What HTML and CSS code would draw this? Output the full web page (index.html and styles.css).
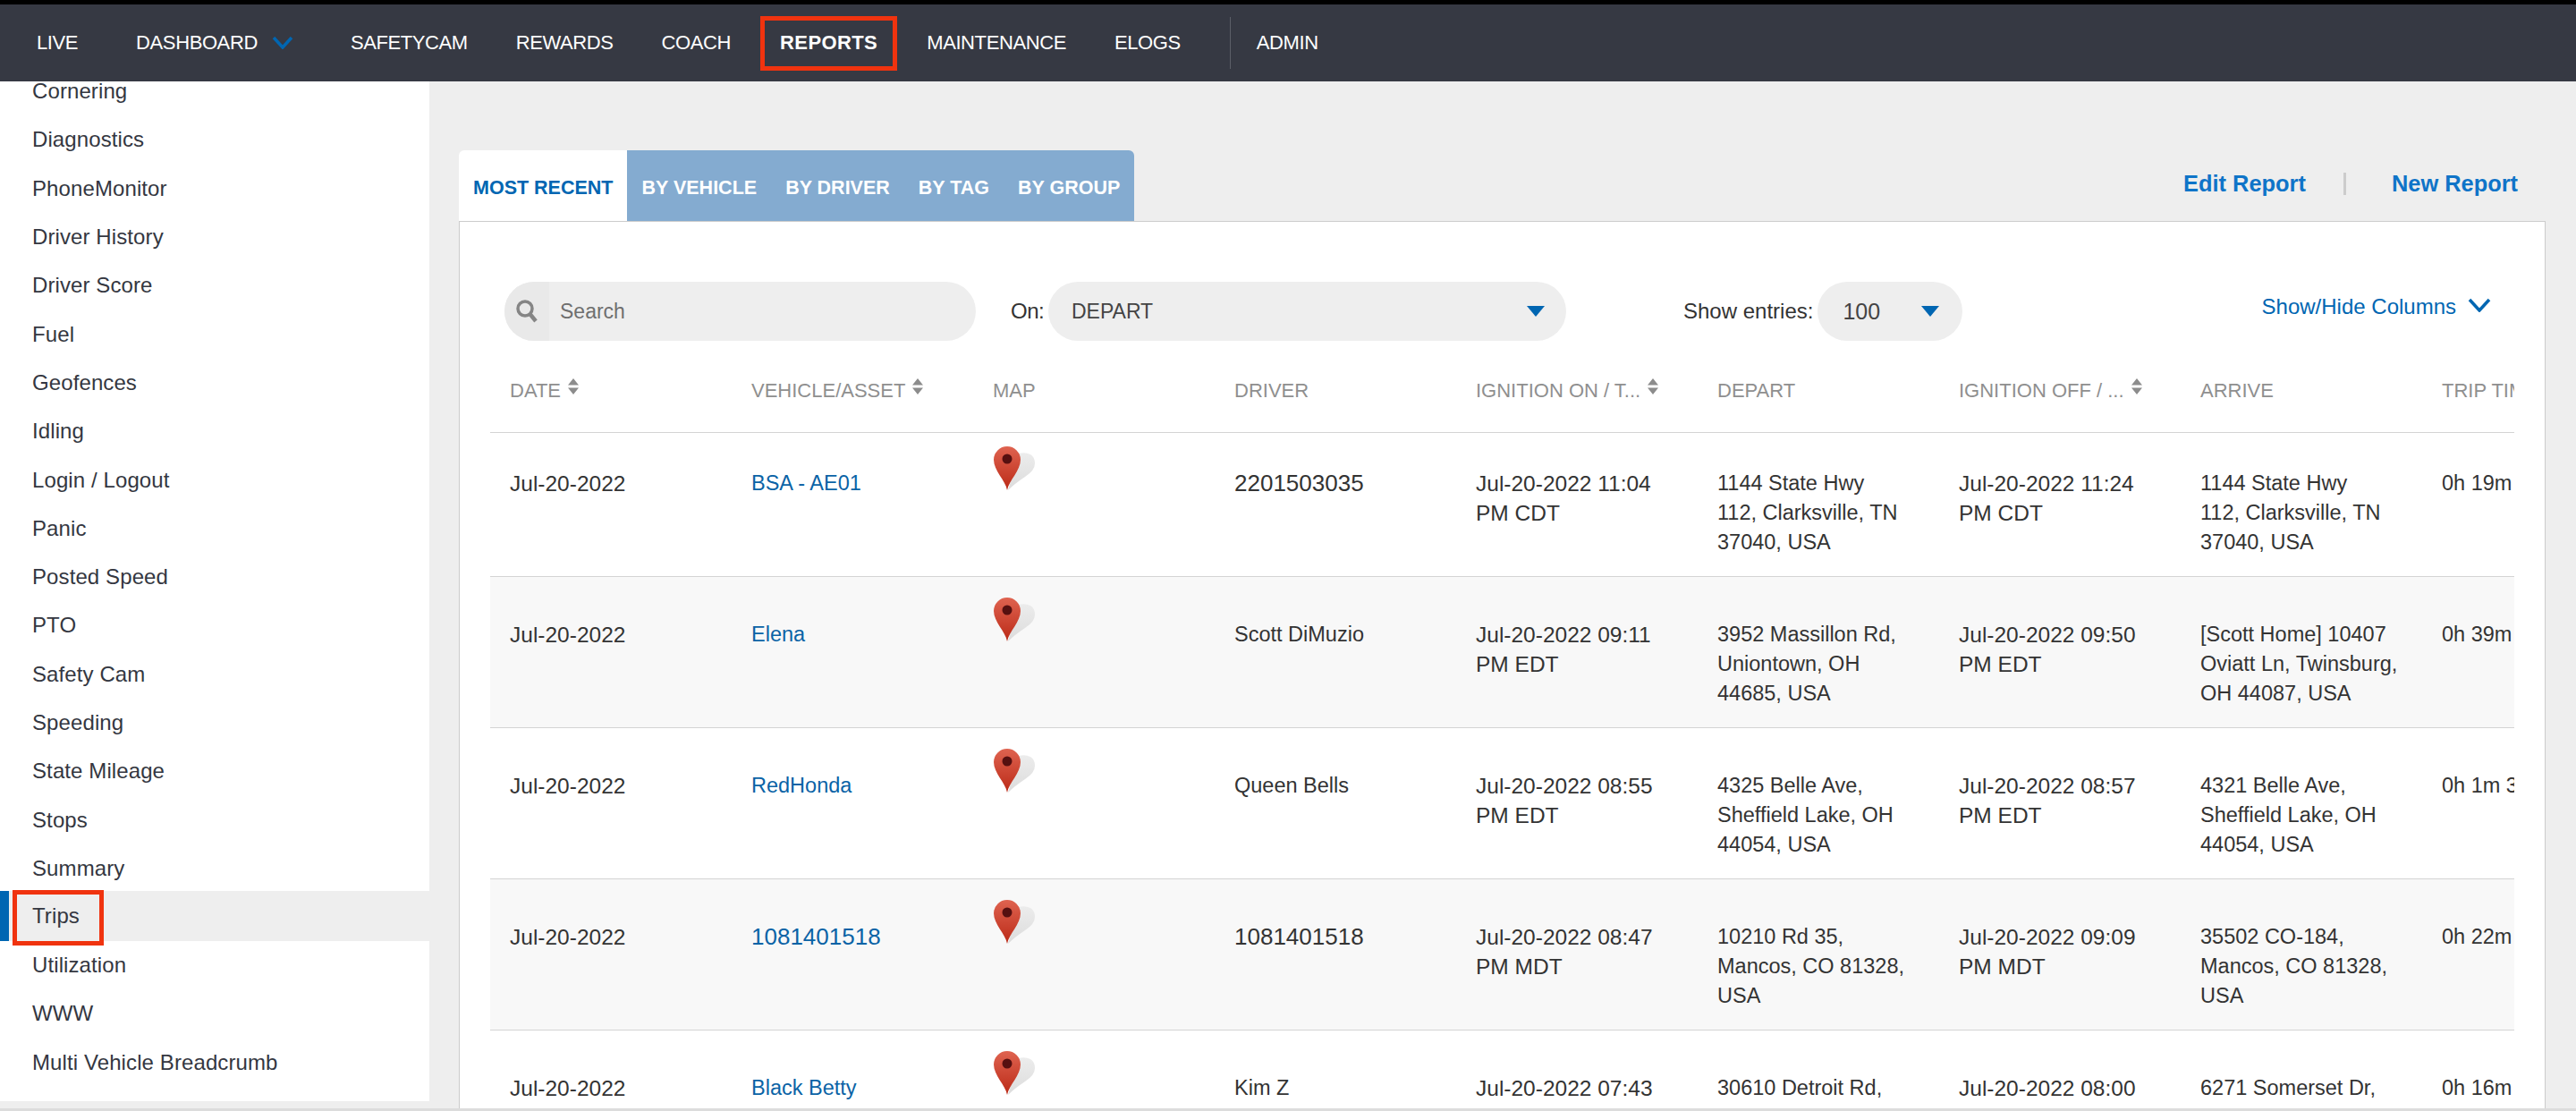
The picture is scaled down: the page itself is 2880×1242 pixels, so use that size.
FILE: index.html
```html
<!DOCTYPE html>
<html lang="en">
<head>
    <meta charset="UTF-8">
    <title>Trips Report</title>
    <link rel="stylesheet" href="styles.css">
</head>
<body>
    <svg class="icon-defs" aria-hidden="true">
        <defs>
            <linearGradient id="pin-fill" x1="0" y1="0" x2="0" y2="1">
                <stop offset="0" stop-color="#df6350"/>
                <stop offset="1" stop-color="#bb2a17"/>
            </linearGradient>
            <linearGradient id="pin-shade" x1="0" y1="0" x2="0" y2="1">
                <stop offset="0" stop-color="#ececec"/>
                <stop offset="1" stop-color="#dcdcdc"/>
            </linearGradient>
        </defs>
        <symbol id="pin" viewBox="0 0 48 50">
            <path d="M17 49L29 8Q36 6 42 9Q47 12 47 19Q47 27 36 34Q24 42 17 49Z" fill="url(#pin-shade)"/>
            <path d="M16 49C14 38 1 27 1 15A15 15 0 0 1 31 15C31 27 18 38 16 49Z" fill="url(#pin-fill)"/>
            <circle cx="16" cy="14" r="5.5" fill="#561010"/>
        </symbol>
        <symbol id="sort" viewBox="0 0 12 18">
            <path d="M6 0L12 7.5H0Z M0 10.5H12L6 18Z" fill="#8c8c8c"/>
        </symbol>
    </svg>

    <nav class="topnav">
        <a href="#" class="nav-live">LIVE</a>
        <a href="#" class="nav-dash">DASHBOARD
            <svg class="nav-chevron" viewBox="0 0 24 14"><path d="M2 1L12 12L22 1" fill="none" stroke="#0066b2" stroke-width="3.5"/></svg>
        </a>
        <a href="#">SAFETYCAM</a>
        <a href="#">REWARDS</a>
        <a href="#">COACH</a>
        <a href="#" class="nav-marked">REPORTS</a>
        <a href="#">MAINTENANCE</a>
        <a href="#">ELOGS</a>
        <span class="nav-divider"></span>
        <a href="#" class="nav-admin">ADMIN</a>
    </nav>

    <div class="page">
        <aside class="sidebar">
            <ul class="report-list">
                <li>Cornering</li>
                <li>Diagnostics</li>
                <li>PhoneMonitor</li>
                <li>Driver History</li>
                <li>Driver Score</li>
                <li>Fuel</li>
                <li>Geofences</li>
                <li>Idling</li>
                <li>Login / Logout</li>
                <li>Panic</li>
                <li>Posted Speed</li>
                <li>PTO</li>
                <li>Safety Cam</li>
                <li>Speeding</li>
                <li>State Mileage</li>
                <li>Stops</li>
                <li>Summary</li>
                <li class="active">Trips<span class="mark-box"></span></li>
                <li>Utilization</li>
                <li>WWW</li>
                <li>Multi Vehicle Breadcrumb</li>
            </ul>
        </aside>

        <main class="content">
            <div class="tab-row">
                <div class="tabs">
                    <a href="#" class="tab current">MOST RECENT</a>
                    <div class="tab-group">
                        <a href="#" class="tab">BY VEHICLE</a>
                        <a href="#" class="tab">BY DRIVER</a>
                        <a href="#" class="tab">BY TAG</a>
                        <a href="#" class="tab">BY GROUP</a>
                    </div>
                </div>
                <div class="report-links">
                    <a href="#">Edit Report</a>
                    <span class="link-sep"></span>
                    <a href="#">New Report</a>
                </div>
            </div>

            <section class="card">
                <div class="filters">
                    <div class="search">
                        <span class="search-icon">
                            <svg viewBox="0 0 24 26" width="24" height="26"><circle cx="10" cy="10" r="8" fill="none" stroke="#858585" stroke-width="3.5"/><path d="M15.5 16L22 24" stroke="#858585" stroke-width="4.5"/></svg>
                        </span>
                        <span class="search-text">Search</span>
                    </div>
                    <label class="filter-label on-label">On:</label>
                    <div class="pill on-select">
                        <span>DEPART</span>
                        <span class="caret"></span>
                    </div>
                    <label class="filter-label entries-label">Show entries:</label>
                    <div class="pill entries-select">
                        <span>100</span>
                        <span class="caret"></span>
                    </div>
                    <a href="#" class="columns-toggle">Show/Hide Columns
                        <svg viewBox="0 0 26 16" width="26" height="16"><path d="M2 2L13 14L24 2" fill="none" stroke="#0066b2" stroke-width="3.5"/></svg>
                    </a>
                </div>

                <div class="table-wrap">
                    <table class="trips">
                        <thead>
                            <tr>
                                <th>DATE <svg class="sort"><use href="#sort"/></svg></th>
                                <th>VEHICLE/ASSET <svg class="sort"><use href="#sort"/></svg></th>
                                <th>MAP</th>
                                <th>DRIVER</th>
                                <th>IGNITION ON / T... <svg class="sort"><use href="#sort"/></svg></th>
                                <th>DEPART</th>
                                <th>IGNITION OFF / ... <svg class="sort"><use href="#sort"/></svg></th>
                                <th>ARRIVE</th>
                                <th>TRIP TIME</th>
                            </tr>
                        </thead>
                        <tbody>
                            <tr>
                                <td class="date">Jul-20-2022</td>
                                <td><a href="#">BSA - AE01</a></td>
                                <td><svg class="pin"><use href="#pin"/></svg></td>
                                <td class="num">2201503035</td>
                                <td class="date">Jul-20-2022 11:04<br>PM CDT</td>
                                <td>1144 State Hwy<br>112, Clarksville, TN<br>37040, USA</td>
                                <td class="date">Jul-20-2022 11:24<br>PM CDT</td>
                                <td>1144 State Hwy<br>112, Clarksville, TN<br>37040, USA</td>
                                <td class="time">0h 19m 12s</td>
                            </tr>
                            <tr>
                                <td class="date">Jul-20-2022</td>
                                <td><a href="#">Elena</a></td>
                                <td><svg class="pin"><use href="#pin"/></svg></td>
                                <td>Scott DiMuzio</td>
                                <td class="date">Jul-20-2022 09:11<br>PM EDT</td>
                                <td>3952 Massillon Rd,<br>Uniontown, OH<br>44685, USA</td>
                                <td class="date">Jul-20-2022 09:50<br>PM EDT</td>
                                <td>[Scott Home] 10407<br>Oviatt Ln, Twinsburg,<br>OH 44087, USA</td>
                                <td class="time">0h 39m 40s</td>
                            </tr>
                            <tr>
                                <td class="date">Jul-20-2022</td>
                                <td><a href="#">RedHonda</a></td>
                                <td><svg class="pin"><use href="#pin"/></svg></td>
                                <td>Queen Bells</td>
                                <td class="date">Jul-20-2022 08:55<br>PM EDT</td>
                                <td>4325 Belle Ave,<br>Sheffield Lake, OH<br>44054, USA</td>
                                <td class="date">Jul-20-2022 08:57<br>PM EDT</td>
                                <td>4321 Belle Ave,<br>Sheffield Lake, OH<br>44054, USA</td>
                                <td class="time">0h 1m 35s</td>
                            </tr>
                            <tr>
                                <td class="date">Jul-20-2022</td>
                                <td><a href="#" class="num">1081401518</a></td>
                                <td><svg class="pin"><use href="#pin"/></svg></td>
                                <td class="num">1081401518</td>
                                <td class="date">Jul-20-2022 08:47<br>PM MDT</td>
                                <td>10210 Rd 35,<br>Mancos, CO 81328,<br>USA</td>
                                <td class="date">Jul-20-2022 09:09<br>PM MDT</td>
                                <td>35502 CO-184,<br>Mancos, CO 81328,<br>USA</td>
                                <td class="time">0h 22m 8s</td>
                            </tr>
                            <tr>
                                <td class="date">Jul-20-2022</td>
                                <td><a href="#">Black Betty</a></td>
                                <td><svg class="pin"><use href="#pin"/></svg></td>
                                <td>Kim Z</td>
                                <td class="date">Jul-20-2022 07:43<br>PM EDT</td>
                                <td>30610 Detroit Rd,<br>Westlake, OH<br>44145, USA</td>
                                <td class="date">Jul-20-2022 08:00<br>PM EDT</td>
                                <td>6271 Somerset Dr,<br>Westlake, OH<br>44145, USA</td>
                                <td class="time">0h 16m 30s</td>
                            </tr>
                        </tbody>
                    </table>
                </div>
            </section>
        </main>
    </div>
    <div class="bottom-strip"></div>
</body>
</html>
```

FILE: styles.css
```css
* {
    box-sizing: border-box;
}
html, body {
    height: 1242px;
    overflow: hidden;
}
body {
    margin: 0;
    display: flex;
    flex-direction: column;
    font-family: "Liberation Sans", Arial, sans-serif;
    font-size: 24px;
    color: #333;
    background-color: #eee;
}
a {
    text-decoration: none;
}
.icon-defs {
    position: absolute;
    width: 0;
    height: 0;
}

/* top nav */
.topnav {
    flex: none;
    height: 91px;
    border-top: 5px solid #000;
    background-color: #363943;
    display: flex;
    align-items: center;
    font-size: 22px;
    letter-spacing: -0.4px;
    position: relative;
    z-index: 2;
}
.topnav a {
    color: #fff;
    margin: 0 27px;
    white-space: nowrap;
}
.topnav .nav-live {
    margin: 0 37px 0 41px;
}
.topnav .nav-dash {
    margin: 0 37px 0 28px;
    display: flex;
    align-items: center;
    gap: 16px;
}
.nav-chevron {
    width: 24px;
    height: 14px;
}
.topnav .nav-marked {
    margin: 0 6px;
    height: 61px;
    padding: 0 17px;
    border: 5px solid #f0330f;
    display: flex;
    align-items: center;
    font-weight: bold;
    letter-spacing: 0.4px;
}
.nav-divider {
    width: 1px;
    height: 58px;
    margin-left: 28px;
    background-color: #5c5f68;
}
.topnav .nav-admin {
    margin-left: 29px;
}

/* layout */
.page {
    flex: 1;
    min-height: 0;
    display: flex;
}
.sidebar {
    flex: none;
    width: 480px;
    height: 1140px;
    background-color: #fff;
    overflow: hidden;
}
.report-list {
    list-style: none;
    margin: -16px 0 0;
    padding: 0;
}
.report-list li {
    height: 54.3px;
    padding-left: 36px;
    display: flex;
    align-items: center;
    color: #343741;
    letter-spacing: 0.1px;
    position: relative;
}
.report-list li.active {
    background-color: #eee;
    border-left: 10px solid #0066b2;
    padding-left: 26px;
    margin-top: -2px;
    height: 56px;
}
.mark-box {
    position: absolute;
    left: 4px;
    top: -1px;
    width: 102px;
    height: 62px;
    border: 5px solid #f0330f;
}

/* main */
.content {
    flex: 1;
    min-width: 0;
    padding: 77px 34px 0 33px;
    display: flex;
    flex-direction: column;
}
.tab-row {
    flex: none;
    height: 79px;
    display: flex;
    justify-content: space-between;
}
.tabs {
    display: flex;
    font-size: 21.5px;
    font-weight: bold;
}
.tab-group {
    display: flex;
    background-color: #84abd0;
    border-radius: 0 6px 0 0;
}
.tab {
    padding: 5px 16px 0;
    display: flex;
    align-items: center;
    color: #fff;
    white-space: nowrap;
}
.tab.current {
    background-color: #fff;
    color: #0066b2;
    border-radius: 6px 0 0 0;
}
.report-links {
    display: flex;
    align-items: center;
    height: 74px;
    margin-right: 31px;
    font-size: 25.4px;
    font-weight: bold;
}
.report-links a {
    color: #0f74c8;
}
.link-sep {
    width: 3px;
    height: 25px;
    margin: 0 51px 0 42px;
    background-color: #ccc;
}

/* card */
.card {
    flex: 1;
    min-height: 0;
    background-color: #fff;
    border: 1px solid #ccc;
    border-width: 1px 1px 0 1px;
    overflow: hidden;
}
.filters {
    height: 132px;
    padding: 67px 60px 0 50px;
    display: flex;
    align-items: flex-start;
}
.search, .pill {
    height: 66px;
    background-color: #eee;
    border-radius: 33px;
    display: flex;
    align-items: center;
    font-size: 23px;
}
.search {
    width: 527px;
    overflow: hidden;
    color: #6f6f6f;
}
.search-icon {
    width: 50px;
    height: 66px;
    padding-left: 13px;
    display: flex;
    align-items: center;
    background-color: #e9e9e9;
}
.search-text {
    margin-left: 12px;
}
.filter-label {
    height: 66px;
    display: flex;
    align-items: center;
    color: #333;
}
.on-label {
    width: 32px;
    margin-left: 39px;
    letter-spacing: -0.5px;
}
.pill {
    color: #444;
    justify-content: space-between;
}
.on-select {
    width: 579px;
    margin-left: 10px;
    padding: 0 24px 0 26px;
}
.entries-label {
    margin-left: 131px;
}
.entries-select {
    width: 162px;
    margin-left: 5px;
    padding: 0 26px 0 28px;
    font-size: 25px;
}
.caret {
    width: 0;
    height: 0;
    border-left: 10px solid transparent;
    border-right: 10px solid transparent;
    border-top: 12px solid #0066b2;
}
.columns-toggle {
    margin-left: auto;
    height: 56px;
    display: flex;
    align-items: center;
    gap: 13px;
    color: #0066b2;
}
.columns-toggle svg {
    margin-top: -4px;
}

/* table */
.table-wrap {
    margin: 0 34px;
    overflow: hidden;
}
.trips {
    width: 2430px;
    table-layout: fixed;
    border-collapse: collapse;
}
.trips th {
    height: 103px;
    padding: 42px 10px 31px 22px;
    border-bottom: 1px solid #d4d4d4;
    font-size: 22px;
    line-height: 30px;
    font-weight: normal;
    text-align: left;
    color: #8f8f8f;
    white-space: nowrap;
    vertical-align: top;
}
.sort {
    width: 12px;
    height: 18px;
    margin-left: 2px;
    vertical-align: 3px;
}
.trips td {
    padding: 48px 10px 21px 22px;
    border-bottom: 1px solid #d4d4d4;
    font-size: 23.5px;
    line-height: 33px;
    vertical-align: top;
    color: #333;
}
.trips tbody tr:first-child td {
    padding-top: 40px;
}
.trips tbody tr:nth-child(even) {
    background-color: #f8f8f8;
}
.trips a {
    color: #0a63a6;
}
.trips td.date {
    font-size: 24.5px;
}
.trips td.time {
    white-space: nowrap;
}
.trips .num {
    font-size: 26px;
}
.pin {
    display: block;
    width: 48px;
    height: 50px;
    margin: -25px 0 0 0;
}

.bottom-strip {
    flex: none;
    height: 3px;
    background-color: #dcdcdc;
}
```
